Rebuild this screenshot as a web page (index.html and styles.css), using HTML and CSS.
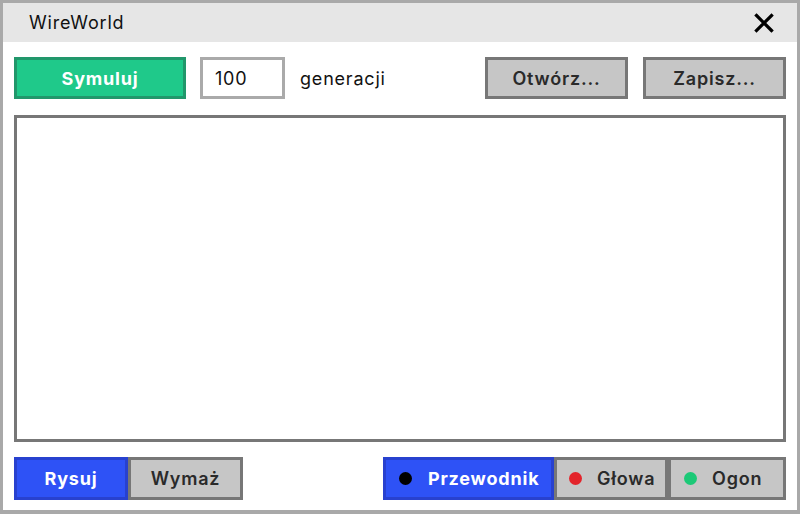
FILE: index.html
```html
<!DOCTYPE html>
<html lang="pl">
<head>
<meta charset="utf-8">
<title>WireWorld</title>
<link rel="stylesheet" href="styles.css">
</head>
<body>
<div class="window">
  <div class="titlebar">
    <span class="title">WireWorld</span>
    <span class="close">
      <svg width="20" height="20" viewBox="0 0 20 20"><path d="M2.5 2.5 L17.5 17.5 M17.5 2.5 L2.5 17.5" stroke="#000" stroke-width="3.2" stroke-linecap="square"/></svg>
    </span>
  </div>
  <div class="content">
    <div class="toolbar">
      <button class="btn btn-green sim">Symuluj</button>
      <div class="input">100</div>
      <span class="label">generacji</span>
      <div class="spacer"></div>
      <button class="btn btn-gray file">Otwórz...</button>
      <button class="btn btn-gray file">Zapisz...</button>
    </div>
    <div class="canvas"></div>
    <div class="bottombar">
      <div class="group">
        <button class="btn btn-blue mode">Rysuj</button>
        <button class="btn btn-gray mode mode2">Wymaż</button>
      </div>
      <div class="group">
        <button class="btn btn-blue state st1"><span class="dot black"></span>Przewodnik</button>
        <button class="btn btn-gray state st2"><span class="dot red"></span>Głowa</button>
        <button class="btn btn-gray state st3"><span class="dot green"></span>Ogon</button>
      </div>
    </div>
  </div>
</div>
</body>
</html>
```
FILE: styles.css
```css
* { box-sizing: border-box; }
html, body { margin: 0; padding: 0; }
body { font-family: Inter, "Noto Sans", sans-serif; background: #fff; letter-spacing: 0.8px; }
.window {
  width: 800px; height: 514px;
  border: 3px solid #a9a9a9;
  border-bottom-width: 4px;
  display: flex; flex-direction: column;
  background: #fff;
}
.titlebar {
  height: 39px; background: #e6e6e6;
  display: flex; align-items: center; justify-content: space-between;
  padding: 0 23px 0 26px;
}
.title { font-size: 18px; color: #111; }
.close { display: flex; }
.content {
  flex: 1; display: flex; flex-direction: column;
  padding: 15px 11px 10px 11px;
}
.toolbar { display: flex; align-items: center; height: 42px; }
.btn {
  font-family: Inter, "Noto Sans", sans-serif; letter-spacing: 0.8px;
  font-size: 18px; height: 42px; border: 3px solid; padding: 0;
  display: flex; align-items: center; justify-content: center;
}
.btn-green { background: #1fc98a; border-color: #21976b; color: #fff; font-weight: 700; }
.btn-gray { background: #c6c6c6; border-color: #777; color: #2a2a2a; font-weight: 600; }
.btn-blue { background: #2e52f6; border-color: #2841cf; color: #fff; font-weight: 700; }
.sim { width: 172px; }
.input {
  margin-left: 14px; width: 85px; height: 42px;
  border: 3px solid #aaa; font-size: 18px; color: #111;
  display: flex; align-items: center; padding-left: 12px;
}
.label { margin-left: 15px; font-size: 18px; color: #111; }
.spacer { flex: 1; }
.file { width: 143px; margin-left: 15px; }
.canvas { margin-top: 16px; height: 327px; border: 3px solid #777; }
.bottombar { margin-top: 15px; display: flex; justify-content: space-between; height: 43px; }
.group { display: flex; }
.mode { width: 114px; height: 43px; }
.mode2 { width: 115px; }
.state { height: 43px; justify-content: flex-start; }
.st1 { width: 171px; padding-left: 13px; }
.st2 { width: 114px; padding-left: 12px; }
.st3 { width: 118px; padding-left: 13px; }
.dot { width: 13px; height: 13px; border-radius: 50%; display: inline-block; margin-right: 16px; }
.st2 .dot, .st3 .dot { margin-right: 15px; }
.black { background: #000; }
.red { background: #e3242b; }
.green { background: #1cc977; }
```
